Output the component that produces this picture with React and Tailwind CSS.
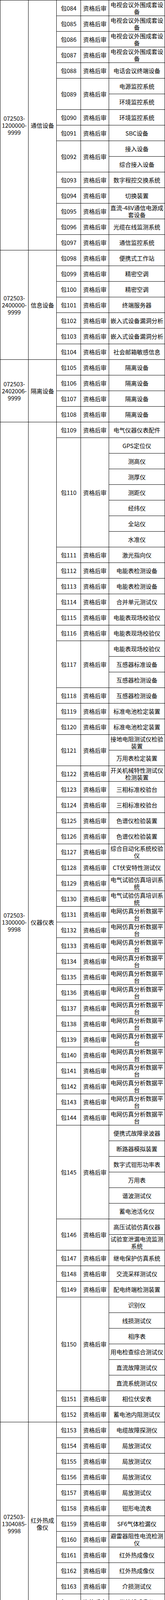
// Bid package table: five product groups, each package with one or more items.
// Nested flex rows/columns on a black ground; the 1px gaps draw the ruling lines.

const groups = [
  {
    code: ["072503-", "1200000-", "9999"],
    name: "通信设备",
    pkgs: [
      "084:电视会议外围成套设备",
      "085:电视会议外围成套设备",
      "086:电视会议外围成套设备",
      "087:电视会议外围成套设备",
      "088:电话会议终端设备",
      "089:电源监控系统|环境监控系统",
      "090:环境监控系统",
      "091:SBC设备",
      "092:接入设备|综合接入设备",
      "093:数字程控交换系统",
      "094:切换装置",
      "095:直流-48V通信电源成套设备",
      "096:光缆在线监测系统",
      "097:通信监控系统",
    ],
  },
  {
    code: ["072503-", "2400000-", "9999"],
    name: "信息设备",
    pkgs: [
      "098:便携式工作站",
      "099:精密空调",
      "100:精密空调",
      "101:终端服务器",
      "102:嵌入式设备漏洞分析",
      "103:嵌入式设备漏洞分析",
      "104:社会邮箱敏感信息",
    ],
  },
  {
    code: ["072503-", "2402006-", "9999"],
    name: "隔离设备",
    pkgs: ["105:隔离设备", "106:隔离设备", "107:隔离设备", "108:隔离设备"],
  },
  {
    code: ["072503-", "1300000-", "9998"],
    name: "仪器仪表",
    pkgs: [
      "109:电气仪器仪表配件",
      "110:GPS定位仪|测高仪|测厚仪|测距仪|经纬仪|全站仪|水准仪",
      "111:激光指向仪",
      "112:电能表检测设备",
      "113:电能表检测设备",
      "114:合并单元测试仪",
      "115:电能表现场校验仪",
      "116:电能表现场校验仪",
      "117:电能表现场校验仪|互感器标准设备|互感器检测设备",
      "118:互感器检测设备",
      "119:标准电池检定装置",
      "120:标准电池检定装置",
      "121:接地电阻测试仪检验装置|万用表检定装置",
      "122:开关机械特性测试仪检测装置",
      "123:三相标准校验台",
      "124:三相标准校验台",
      "125:色谱仪检验装置",
      "126:色谱仪检验装置",
      "127:综合自动化系统校验仪",
      "128:CT伏安特性测试仪",
      "129:电气试验仿真培训系统",
      "130:电气试验仿真培训系统",
      ...Array.from({ length: 14 }, (_, i) => `${131 + i}:电网仿真分析数据平台`),
      "145:便携式故障录波器|断路器模拟装置|数字式钳形功率表|万用表|谐波测试仪|蓄电池活化仪",
      "146:高压试验仿真仪器|试验室泄漏电流监测系统",
      "147:继电保护仿真系统",
      "148:交流采样测试仪",
      "149:配电终端检测装置",
      "150:识别仪|线损测试仪|相序表|用电检查综合测试仪|直流故障测试仪|直流系统测试仪",
      "151:相位伏安表",
      "152:蓄电池内阻测试仪",
    ],
  },
  {
    code: ["072503-", "1304085-", "9998"],
    name: "红外热成像仪",
    pkgs: [
      "153:电缆故障探测仪",
      "154:局放测试仪",
      "155:局放测试仪",
      "156:局放测试仪",
      "157:局放测试仪",
      "158:钳形电流表",
      "159:SF6气体检漏仪",
      "160:避雷器阻性电流检测仪",
      "161:红外热成像仪",
      "162:红外热成像仪",
      "163:介损测试仪",
      "164:紫外线成像仪",
      "165:紫外线成像仪",
    ],
  },
];

const parse = (s) => {
  const [no, rest] = s.split(":");
  return { no, items: rest.split("|") };
};

function Package({ no, items }) {
  return (
    <div className="flex gap-px">
      <div className="flex w-[61px] shrink-0 items-center justify-center bg-white">{"包" + no}</div>
      <div className="flex w-[71px] shrink-0 items-center justify-center bg-white">资格后审</div>
      <div className="flex flex-col gap-px">
        {items.map((it, i) => (
          <div
            key={i}
            className="flex h-[39px] w-[142px] items-center justify-center overflow-hidden bg-white text-center"
          >
            {it}
          </div>
        ))}
      </div>
    </div>
  );
}

function Group({ code, name, pkgs }) {
  return (
    <div className="flex gap-px">
      <div className="flex w-[71px] shrink-0 items-center justify-center bg-white text-center">
        <div>
          {code.map((l) => (
            <div key={l} className="whitespace-nowrap">{l}</div>
          ))}
        </div>
      </div>
      <div className="flex w-[71px] shrink-0 items-center justify-center bg-white px-[5px] text-center">
        {name}
      </div>
      <div className="flex flex-col gap-px">
        {pkgs.map(parse).map((p) => (
          <Package key={p.no} no={p.no} items={p.items} />
        ))}
      </div>
    </div>
  );
}

export default function App() {
  return (
    <div className="flex w-[422px] flex-col gap-px bg-black p-px font-['Noto_Sans_CJK_SC',sans-serif] text-[15px] leading-[18px] text-black">
      {groups.map((g) => (
        <Group key={g.name} code={g.code} name={g.name} pkgs={g.pkgs} />
      ))}
    </div>
  );
}
